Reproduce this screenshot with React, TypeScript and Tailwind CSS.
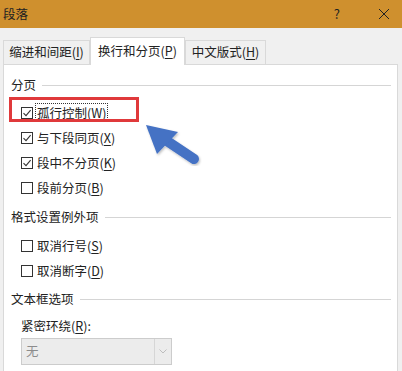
import React from "react";

const font = { fontFamily: '"Noto Sans CJK SC", "Microsoft YaHei", sans-serif' };

function Acc({ k }: { k: string }) {
  return (
    <span>
      (<span className="underline underline-offset-2">{k}</span>)
    </span>
  );
}

function Box({ checked }: { checked: boolean }) {
  return (
    <span className="w-[12px] h-[12px] border border-[#333333] bg-white flex items-center justify-center shrink-0">
      {checked && (
        <svg width="10" height="10" viewBox="0 0 10 10">
          <path d="M1.5 5.2 L4 7.6 L8.6 2.2" stroke="#333" strokeWidth="1.1" fill="none" />
        </svg>
      )}
    </span>
  );
}

function Row({ label, k, checked, focus }: { label: string; k: string; checked: boolean; focus?: boolean }) {
  return (
    <div className="h-[25px] flex items-center pl-[10px] gap-[3px]">
      <Box checked={checked} />
      <span
        className={`text-[12.5px] text-[#222] leading-[15px] px-[1px] py-[1px] ${
          focus ? "outline outline-1 outline-dotted outline-[#333]" : ""
        }`}
      >
        {label}
        <Acc k={k} />
      </span>
    </div>
  );
}

function Header({ title }: { title: string }) {
  return (
    <div className="h-[16px] flex items-center gap-[6px] pr-[6px]">
      <span className="text-[12.5px] text-[#222] leading-none whitespace-nowrap">{title}</span>
      <div className="flex-1 h-px bg-[#d5d5d5]" />
    </div>
  );
}

export default function App() {
  return (
    <div className="w-[402px] h-[371px] bg-[#f0f0f0] overflow-hidden relative" style={font}>
      {/* title bar */}
      <div className="h-[28px] bg-[#cf902e] flex items-center pl-[3px] pr-[12px]">
        <span className="text-[12.5px] text-[#222] flex-1">段落</span>
        <span className="text-[13px] text-[#222] mr-[38px]">?</span>
        <svg width="12" height="12" viewBox="0 0 12 12">
          <path d="M1 1 L11 11 M11 1 L1 11" stroke="#222" strokeWidth="1" />
        </svg>
      </div>

      {/* tabs */}
      <div className="flex items-end pl-[3px] h-[36px]">
        <div className="w-[87px] h-[24px] border border-b-0 border-[#d9d9d9] bg-[#f0f0f0] flex items-center justify-center text-[12.5px] text-[#222]">
          缩进和间距<Acc k="I" />
        </div>
        <div className="w-[95px] h-[28px] -mb-px relative z-10 border border-b-0 border-[#d9d9d9] bg-white flex items-center justify-center text-[12.5px] text-[#222]">
          换行和分页<Acc k="P" />
        </div>
        <div className="w-[81px] h-[24px] border border-b-0 border-[#d9d9d9] bg-[#f0f0f0] flex items-center justify-center text-[12.5px] text-[#222]">
          中文版式<Acc k="H" />
        </div>
      </div>

      {/* panel */}
      <div className="ml-[3px] w-[395px] h-[320px] bg-white border border-[#d9d9d9] pl-[7px] pt-[12px] flex flex-col">
        <Header title="分页" />
        <div className="mt-[7px]">
          <Row label="孤行控制" k="W" checked focus />
          <Row label="与下段同页" k="X" checked />
          <Row label="段中不分页" k="K" checked />
          <Row label="段前分页" k="B" checked={false} />
        </div>
        <div className="mt-[9px]">
          <Header title="格式设置例外项" />
        </div>
        <div className="mt-[8px]">
          <Row label="取消行号" k="S" checked={false} />
          <Row label="取消断字" k="D" checked={false} />
        </div>
        <div className="mt-[8px]">
          <Header title="文本框选项" />
        </div>
        <div className="mt-[11px] pl-[10px] h-[16px] flex items-center text-[12.5px] text-[#222] leading-none">
          紧密环绕<Acc k="R" />:
        </div>
        <div className="mt-[4px] ml-[10px] w-[151px] h-[27px] border border-[#cccccc] bg-[#ececec] flex items-center">
          <span className="flex-1 pl-[4px] text-[12.5px] text-[#8c8c8c]">无</span>
          <div className="w-[17px] h-full border-l border-[#d6d6d6] flex items-center justify-center">
            <svg width="8" height="5" viewBox="0 0 8 5">
              <path d="M0.5 0.5 L4 4 L7.5 0.5" stroke="#bdbdbd" strokeWidth="1" fill="none" />
            </svg>
          </div>
        </div>
      </div>

      {/* red highlight */}
      <div className="absolute left-[9px] top-[97px] w-[130px] h-[25px] border-[3px] border-[#e0393b]" />

      {/* blue arrow */}
      <svg className="absolute left-[140px] top-[115px]" width="70" height="55" viewBox="0 0 70 55">
        <defs>
          <filter id="sh" x="-20%" y="-20%" width="140%" height="140%">
            <feDropShadow dx="1" dy="1.5" stdDeviation="1.2" floodColor="#000" floodOpacity="0.25" />
          </filter>
        </defs>
        <g filter="url(#sh)">
          <path d="M54 44 L24 24" stroke="#4472c4" strokeWidth="10" strokeLinecap="round" />
          <path d="M6 10 L38 17 L17 39 Z" fill="#4472c4" />
        </g>
      </svg>
    </div>
  );
}
